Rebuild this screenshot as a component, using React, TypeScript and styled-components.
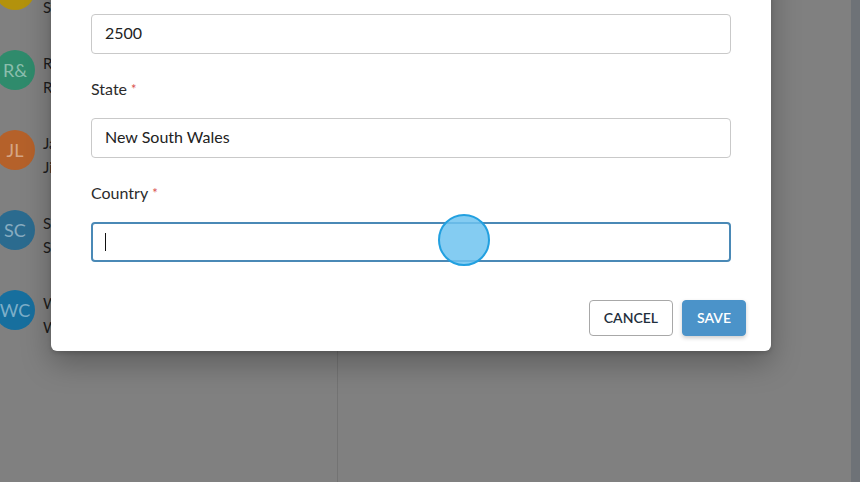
import styled, { createGlobalStyle } from 'styled-components'

const GlobalStyle = createGlobalStyle`
  html, body {
    margin: 0;
    padding: 0;
    height: 100%;
    overflow: hidden;
  }
  body {
    font-family: Lato, 'Open Sans', Arial, sans-serif;
  }
`

// the page under the modal, already shown as dimmed by the backdrop
const Page = styled.div`
  position: relative;
  width: 860px;
  height: 482px;
  display: flex;
  background: #808080;
  overflow: hidden;
`

const Sidebar = styled.aside`
  width: 337px;
  border-right: 1px solid #737373;
  display: flex;
  flex-direction: column;
  margin-top: -50px;
`

const ContactRow = styled.div`
  height: 80px;
  display: flex;
  align-items: flex-start;
  gap: 8px;
  margin-left: -5px;
`

const Avatar = styled.div<{ $color: string }>`
  width: 40px;
  height: 40px;
  margin-top: 20px;
  border-radius: 50%;
  background: ${(p) => p.$color};
  color: rgba(255, 255, 255, 0.45);
  font-size: 18px;
  display: flex;
  align-items: center;
  justify-content: center;
  flex-shrink: 0;
`

const ContactText = styled.div`
  margin-top: 21px;
  font-size: 15px;
  line-height: 24px;
  color: #1c1c1c;
  white-space: nowrap;
`

const Content = styled.main`
  flex: 1;
`

const ScrollEdge = styled.div`
  width: 9px;
  background: #6e7277;
`

const Backdrop = styled.div`
  position: absolute;
  inset: 0;
  display: flex;
  align-items: flex-end;
  padding: 0 0 131px 51px;
  overflow: hidden;
`

const Modal = styled.div`
  width: 720px;
  background: #fff;
  border-radius: 6px;
  box-shadow: 0 12px 30px rgba(0, 0, 0, 0.28), 0 2px 4px rgba(0, 0, 0, 0.15);
  display: flex;
  flex-direction: column;
`

const Body = styled.div`
  padding: 20px 40px 0;
  display: flex;
  flex-direction: column;
`

const Field = styled.div`
  display: flex;
  flex-direction: column;
  & + & {
    margin-top: 25px;
  }
`

const Label = styled.label`
  font-size: 16px;
  line-height: 20px;
  color: #2b2b2b;
  margin-bottom: 19px;
`

const Required = styled.span`
  color: #d9534f;
  font-size: 13px;
  margin-left: 4px;
  vertical-align: top;
`

const Input = styled.div<{ $focused?: boolean }>`
  box-sizing: border-box;
  height: 40px;
  border: ${(p) => (p.$focused ? '2px solid #4a89b6' : '1px solid #c9c9c9')};
  border-radius: 4px;
  padding: 0 ${(p) => (p.$focused ? '12px' : '13px')} 3px;
  display: flex;
  align-items: center;
  font-size: 16px;
  color: #222;
`

const Caret = styled.span`
  width: 1px;
  height: 18px;
  margin-top: 3px;
  background: #111;
`

const Footer = styled.div`
  display: flex;
  justify-content: flex-end;
  gap: 9px;
  padding: 38px 25px 15px;
`

const Button = styled.button<{ $primary?: boolean }>`
  height: 36px;
  padding: 0 14px 2px;
  border-radius: 4px;
  font-family: Lato, 'Open Sans', Arial, sans-serif;
  font-size: 14px;
  font-weight: 600;
  border: 1px solid ${(p) => (p.$primary ? '#4b93c9' : '#a8a8a8')};
  background: ${(p) => (p.$primary ? '#4b93c9' : '#fff')};
  color: ${(p) => (p.$primary ? '#fff' : '#1f2f3d')};
  box-shadow: ${(p) => (p.$primary ? '0 2px 4px rgba(0,0,0,0.2)' : 'none')};
`

const Touch = styled.div`
  position: absolute;
  left: 438px;
  top: 214px;
  width: 52px;
  height: 52px;
  box-sizing: border-box;
  border-radius: 50%;
  border: 2px solid #22a0e0;
  background: rgba(110, 195, 240, 0.85);
`

const contacts = [
  { initials: 'SM', color: '#b3920c', name: 'Sophie Mitchell', sub: 'Sydney' },
  { initials: 'R&', color: '#2f8b6c', name: 'Rachel & Tom Baker', sub: 'Randwick' },
  { initials: 'JL', color: '#b5612a', name: 'James Lee', sub: 'Jindabyne' },
  { initials: 'SC', color: '#2b6b8f', name: 'Sam Carter', sub: 'Surry Hills' },
  { initials: 'WC', color: '#176f9e', name: 'William Chen', sub: 'Wollongong' },
]

export default function App() {
  return (
    <>
      <GlobalStyle />
      <Page>
        <Sidebar>
          {contacts.map((c) => (
            <ContactRow key={c.initials}>
              <Avatar $color={c.color}>{c.initials}</Avatar>
              <ContactText>
                {c.name}
                <br />
                {c.sub}
              </ContactText>
            </ContactRow>
          ))}
        </Sidebar>
        <Content />
        <ScrollEdge />

        <Backdrop>
          <Modal>
            <Body>
              <Field>
                <Label>
                  Postcode<Required>*</Required>
                </Label>
                <Input>2500</Input>
              </Field>
              <Field>
                <Label>
                  State<Required>*</Required>
                </Label>
                <Input>New South Wales</Input>
              </Field>
              <Field>
                <Label>
                  Country<Required>*</Required>
                </Label>
                <Input $focused>
                  <Caret />
                </Input>
              </Field>
            </Body>
            <Footer>
              <Button>CANCEL</Button>
              <Button $primary>SAVE</Button>
            </Footer>
          </Modal>
        </Backdrop>
        <Touch />
      </Page>
    </>
  )
}
